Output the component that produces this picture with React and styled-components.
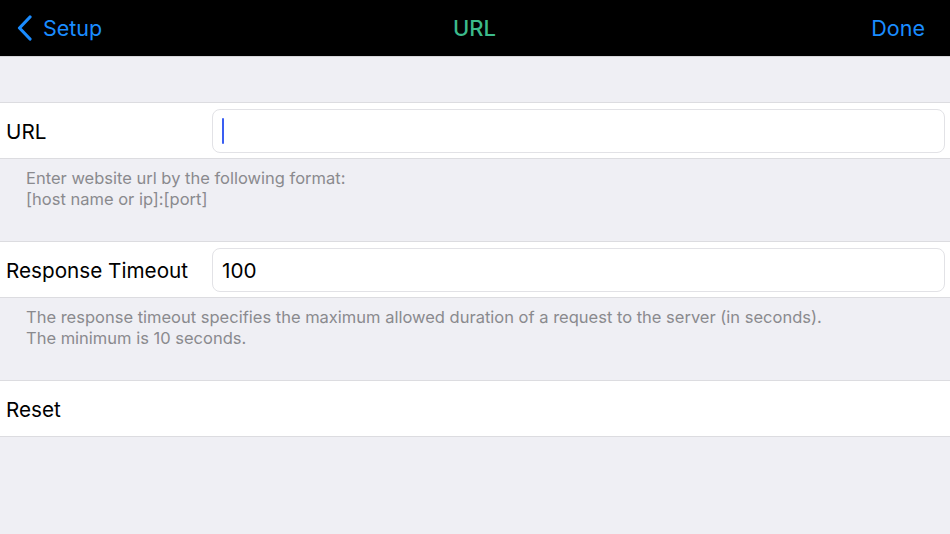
import React from "react";
import styled, { createGlobalStyle } from "styled-components";

const GlobalStyle = createGlobalStyle`
  html, body {
    margin: 0;
    padding: 0;
    background: #efeff4;
  }
  body {
    font-family: Inter, "Noto Sans", sans-serif;
  }
`;

const Screen = styled.div`
  width: 950px;
  height: 534px;
  background: #efeff4;
  overflow: hidden;
`;

const NavBar = styled.div`
  height: 56px;
  background: #000;
  border-bottom: 1px solid #d6d6da;
  display: grid;
  grid-template-columns: 1fr auto 1fr;
  align-items: center;
  padding: 0 25px 0 16px;
`;

const BackButton = styled.div`
  display: flex;
  align-items: center;
  gap: 10px;
  color: #1a8cff;
  font-size: 21.5px;
  svg {
    display: block;
  }
`;

const Title = styled.div`
  color: #3cba8b;
  font-size: 22px;
  font-weight: 500;
  transform: translateX(4px);
`;

const DoneButton = styled.div`
  justify-self: end;
  color: #1a8cff;
  font-size: 21.5px;
`;

const Spacer = styled.div`
  height: 45px;
`;

const Row = styled.div`
  height: 55px;
  background: #fff;
  border-top: 1px solid #dcdce0;
  border-bottom: 1px solid #dcdce0;
  display: flex;
  align-items: center;
  padding: 0 5px 0 6px;
`;

const Label = styled.div`
  width: 206px;
  flex-shrink: 0;
  font-size: 20.7px;
  padding-top: 2px;
  color: #000;
`;

const Field = styled.div`
  flex: 1;
  height: 42px;
  box-sizing: content-box;
  border: 1px solid #e2e2e6;
  border-radius: 8px;
  display: flex;
  align-items: center;
  padding-left: 9px;
  font-size: 20.7px;
  color: #000;
  span.value {
    padding-top: 2px;
  }
`;

const Caret = styled.span`
  width: 2px;
  height: 26px;
  background: #3a5ef2;
  border-radius: 1px;
`;

const Footer = styled.div`
  height: 82px;
  box-sizing: border-box;
  padding: 9px 26px 0;
  color: #8a8a8e;
  font-size: 16.5px;
  line-height: 21px;
`;

function App() {
  return (
    <Screen>
      <GlobalStyle />
      <NavBar>
        <BackButton>
          <svg width="17" height="26" viewBox="0 0 17 26">
            <path
              d="M14 2 L3.5 13 L14 24"
              fill="none"
              stroke="#1a8cff"
              strokeWidth="3.2"
              strokeLinecap="round"
              strokeLinejoin="round"
            />
          </svg>
          Setup
        </BackButton>
        <Title>URL</Title>
        <DoneButton>Done</DoneButton>
      </NavBar>
      <Spacer />
      <Row>
        <Label>URL</Label>
        <Field>
          <Caret />
        </Field>
      </Row>
      <Footer>
        Enter website url by the following format:
        <br />
        [host name or ip]:[port]
      </Footer>
      <Row>
        <Label>Response Timeout</Label>
        <Field>
          <span className="value">100</span>
        </Field>
      </Row>
      <Footer>
        The response timeout specifies the maximum allowed duration of a request to the server (in seconds).
        <br />
        The minimum is 10 seconds.
      </Footer>
      <Row>
        <Label>Reset</Label>
      </Row>
    </Screen>
  );
}

export default App;
